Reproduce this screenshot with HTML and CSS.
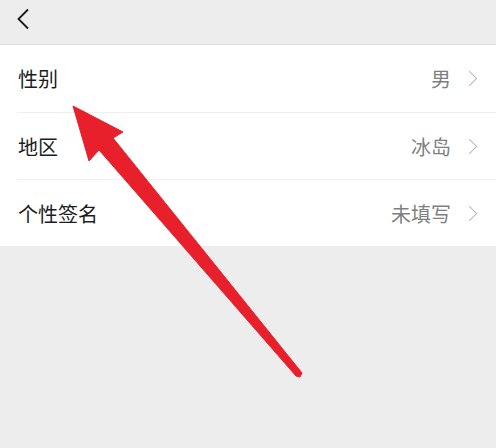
FILE: index.html
```html
<!DOCTYPE html>
<html lang="zh-CN">
<head>
  <meta charset="UTF-8">
  <title>个人信息</title>
  <link rel="stylesheet" href="styles.css">
</head>
<body>

<div class="topbar">
  <svg class="back" width="14" height="22" viewBox="0 0 14 22">
    <polyline points="12,1.5 2.5,11 12,20.5" fill="none" stroke="#1a1a1a" stroke-width="1.8"/>
  </svg>
</div>

<div class="list">
  <div class="row">
    <span class="label">性别</span>
    <span class="value">男</span>
    <span class="chev"></span>
  </div>
  <div class="row">
    <span class="label">地区</span>
    <span class="value">冰岛</span>
    <span class="chev"></span>
  </div>
  <div class="row">
    <span class="label">个性签名</span>
    <span class="value">未填写</span>
    <span class="chev"></span>
  </div>
</div>

<!-- annotation arrow drawn over the screen -->
<svg class="arrow" width="496" height="448" viewBox="0 0 496 448">
  <polygon points="73,106 123,132 113,138 302,373 300,377 296,376 99,150 89,161"
           fill="#e8202b" stroke="#e8202b" stroke-width="1" stroke-linejoin="round"/>
</svg>

</body>
</html>
```

FILE: styles.css
```css
* {
  box-sizing: border-box;
  margin: 0;
  padding: 0;
}
body {
  background: #ededed;
  width: 496px;
  height: 448px;
  position: relative;
  overflow: hidden;
  font-family: "Noto Sans CJK SC", "Noto Sans", sans-serif;
}
.topbar {
  height: 45px;
  border-bottom: 1px solid #dcdcdc;
  display: flex;
  align-items: center;
  padding-left: 16px;
  padding-bottom: 7px;
}
.list {
  background: #fff;
  padding-left: 17px;
}
.row {
  height: 67px;
  display: flex;
  align-items: center;
  padding-right: 21px;
  border-top: 1px solid #efefef;
}
.row:first-child {
  border-top: none;
}
.label {
  flex: 1;
  font-size: 20px;
  color: #1c1c1c;
  padding-left: 1px;
}
.value {
  font-size: 20px;
  color: #808080;
  margin-right: 13px;
}
.chev {
  width: 11px;
  height: 11px;
  border-top: 1.6px solid #b8b8b8;
  border-right: 1.6px solid #b8b8b8;
  transform: rotate(45deg);
}
.arrow {
  position: absolute;
  left: 0;
  top: 0;
}
```
